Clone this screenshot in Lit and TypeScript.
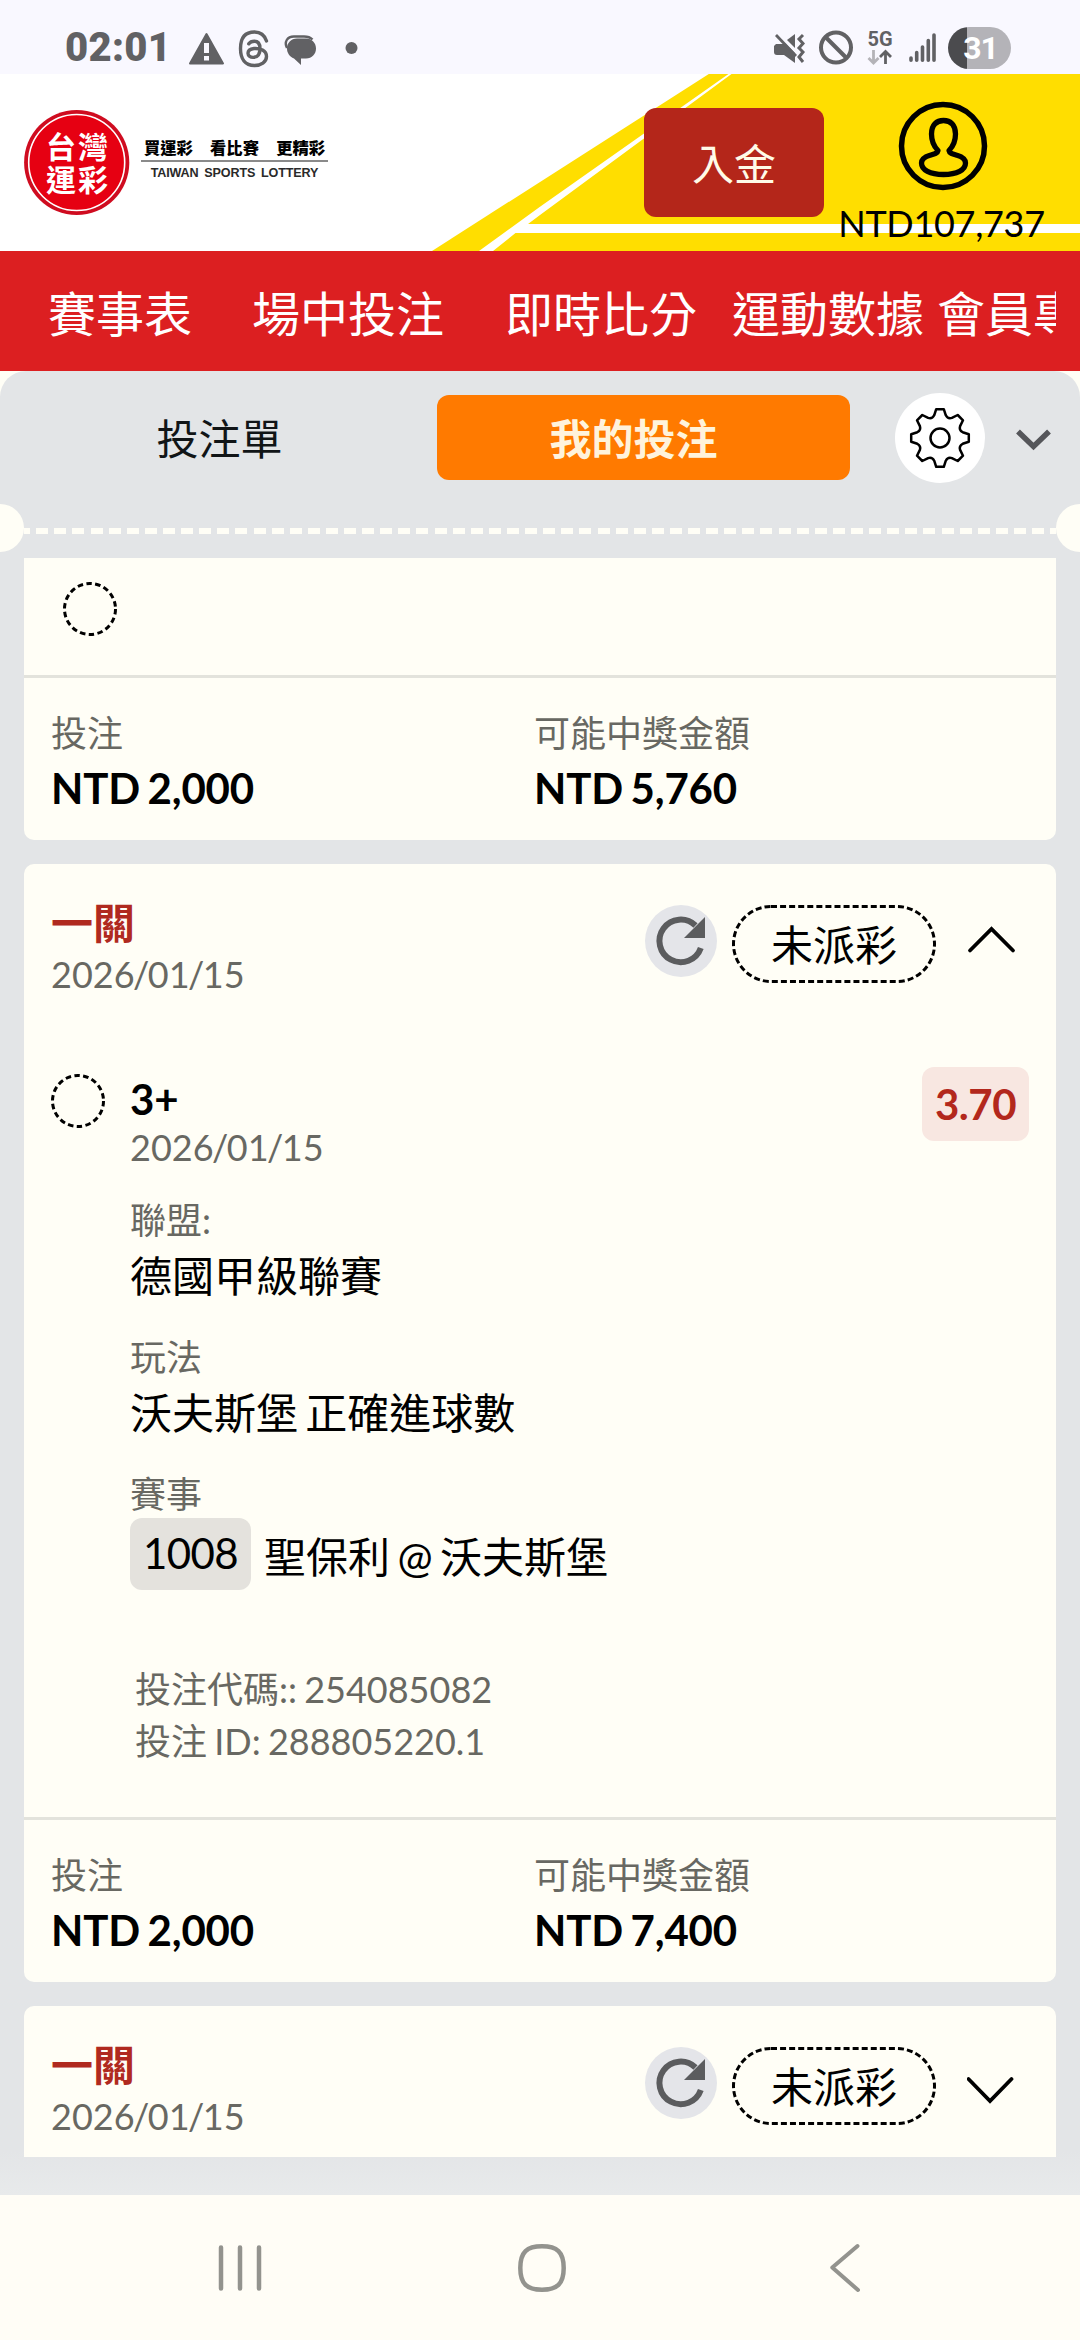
import { LitElement, html, css, svg, nothing } from "lit";
import { customElement, property } from "lit/decorators.js";

const FONT = css`Lato, "Noto Sans CJK TC", sans-serif`;

interface Leg {
  pick: string;
  date: string;
  odds: string;
  league: string;
  market: string;
  matchNo: string;
  match: string;
  code: string;
  id: string;
}

@customElement("status-bar")
class StatusBar extends LitElement {
  static styles = css`
    :host {
      display: block;
    }
    .bar {
      height: 74px;
      box-sizing: border-box;
      padding: 0 69px 0 65px;
      display: flex;
      justify-content: space-between;
      background: #f9f8ff;
      color: #616164;
      font-family: Roboto, sans-serif;
    }
    .left,
    .right {
      display: flex;
      align-items: flex-start;
    }
    .time {
      width: 120px;
      font-size: 40px;
      font-weight: 900;
      line-height: 96px;
      letter-spacing: 0.3px;
    }
    svg {
      display: block;
    }
    .battery {
      width: 63px;
      height: 42px;
      margin-top: 27px;
      border-radius: 21px;
      background: linear-gradient(90deg, #4b4b4e 19px, #b4b3b8 19px);
      color: #fff;
      font-size: 32px;
      font-weight: 700;
      line-height: 43px;
      text-align: center;
      box-sizing: border-box;
      padding-left: 2px;
      letter-spacing: -1px;
    }
  `;
  render() {
    return html`<div class="bar">
      <div class="left">
        <div class="time">02:01</div>
        <svg width="180" height="74" viewBox="185 0 180 74">
          <path fill="#616164" fill-rule="evenodd" stroke="#616164" stroke-width="2" stroke-linejoin="round"
            d="M206.5 34 L223 63.500 H190 Z" />
          <path fill="#f9f8ff" d="M204 43h5v10h-5z M204 56h5v4.500h-5z" />
          <path fill="none" stroke="#616164" stroke-width="3.400" stroke-linecap="round" stroke-linejoin="round"
            d="M266.500 41 C264.500 35 260.500 32 254.500 32 C245 32 240.500 38 240.500 48.500 C240.500 59 245 65.500 254.500 65.500 C261 65.500 266.500 62 266.500 56.500 C266.500 50.500 260 48 254 48.500 C250 49 248 50.800 248 53.300 C248 56 250.500 57.600 253.500 57.400 C258.500 57.100 260 53.500 260 48.500 C260 43.500 258 41.200 254.300 41.200 C251.800 41.200 250 42 248.800 43.800" />
          <path fill="none" stroke="#616164" stroke-width="2.400" d="M287 48 C284 42 287 36.500 294 36.500 H304 C308 36.500 311 38 312.500 39.500" />
          <path fill="#616164" d="M297 38.500 H306 C312 38.500 316 43 316 48.500 C316 54 312 58.500 306 58.500 H301 V65 L294 58.500 C289.500 56.500 287 53 287 48.500 C287 43 291 38.500 297 38.500 Z" />
          <circle cx="351.500" cy="48" r="6" fill="#616164" />
        </svg>
      </div>
      <div class="right">
        <svg width="178" height="74" viewBox="770 0 178 74">
          <g fill="#616164">
            <path d="M776 44 H783 L785 43 L795 53 V63 L784 55 H777 Q774 55 774 52 V46 Z" />
            <path d="M787 40 L795 34 V48 Z" />
          </g>
          <g fill="none" stroke="#616164">
            <path stroke-width="2.800" d="M776 35 L796 56" />
            <path stroke-width="3" d="M803 35 L799 39 L803 43.500 L799 48 L803 52 L799 57 L803 62" />
            <circle cx="836" cy="47.500" r="15" stroke-width="4" />
            <path stroke-width="4" d="M825.500 37 L846.500 58" />
            <path stroke="#b4b3b8" stroke-width="2.800" d="M873.500 50 V63 M868.500 58 L873.500 63 L878.500 58" />
            <path stroke-width="2.800" d="M885.500 64 V51.500 M880 57 L885.500 51.500 L891 57" />
            <path stroke-width="3.600" stroke-linecap="round" d="M911 58 V60.200 M916.700 52.500 V60.200 M922.500 47 V60.200 M928.300 40.500 V60.200 M934 35 V60.200" />
          </g>
          <text x="867.500" y="46" font-size="20" font-weight="700" fill="#616164">5G</text>
        </svg>
        <div class="battery">31</div>
      </div>
    </div>`;
  }
}

@customElement("site-header")
class SiteHeader extends LitElement {
  static styles = css`
    :host {
      display: block;
      font-family: ${FONT};
    }
    .header {
      position: relative;
      height: 177px;
      background: #fff;
    }
    .bg {
      position: absolute;
      inset: 0;
      display: block;
    }
    .content {
      position: relative;
      display: flex;
      height: 177px;
    }
    .seal {
      display: block;
      margin: 35px 0 0 23px;
    }
    .brand {
      margin: 64px 0 0 10px;
      width: 187px;
      height: 50px;
    }
    .slogan {
      display: flex;
      justify-content: space-between;
      height: 24px;
      padding: 0 3px 0 3px;
      font-size: 16.3px;
      font-weight: 900;
      line-height: 20px;
      color: #000;
      border-bottom: 2px solid #8a8a8a;
      box-sizing: border-box;
    }
    .english {
      font: 700 12.6px / 23px "Liberation Sans", sans-serif;
      color: #2a2a2a;
      text-align: center;
      word-spacing: 2.500px;
      letter-spacing: -0.15px;
      white-space: nowrap;
    }
    .deposit {
      margin: 34px 0 0 316px;
      width: 180px;
      height: 109px;
      border-radius: 12px;
      background: #b4261a;
      color: #fffbe8;
      font-size: 42px;
      line-height: 112px;
      text-align: center;
    }
    .account {
      width: 237px;
      display: flex;
      flex-direction: column;
      align-items: center;
      padding-top: 26px;
    }
    .account svg {
      display: block;
    }
    .balance {
      font-size: 36px;
      line-height: 44px;
      margin-top: 9px;
      padding-right: 2px;
      letter-spacing: -0.3px;
      color: #000;
    }
    .nav {
      height: 120px;
      background: #dc1f21;
      padding: 0 24px;
    }
    .items {
      display: flex;
      overflow: hidden;
      color: #fff;
      font-size: 48px;
      line-height: 126px;
      white-space: nowrap;
      height: 120px;
    }
    .items span {
      flex: none;
    }
    .w1 {
      width: 204px;
      margin-left: 24px;
    }
    .w2 {
      width: 253px;
    }
    .w3 {
      width: 227px;
    }
    .w4 {
      width: 205px;
    }
  `;
  render() {
    return html`<div class="header">
        <svg class="bg" width="1080" height="177" viewBox="0 74 1080 177">
          <path fill="#ffde00" d="M432 251 L708.800 74 H1080 V251 Z" />
          <path fill="#fff" d="M479 251 L540 206.700 L728.500 74 H731.500 L540 215 L528 224 H1080 V233 H515.500 L493 251 Z" />
        </svg>
        <div class="content">
          <svg class="seal" width="108" height="107" viewBox="23 109 108 107">
            <circle cx="76.700" cy="162.500" r="52.600" fill="#cf0c20" />
            <circle cx="76.700" cy="162.500" r="48" fill="#e60012" stroke="#fff" stroke-width="1.600" />
            <g fill="#fff" font-size="30" font-weight="700" letter-spacing="2">
              <text x="46" y="158">台灣</text>
              <text x="46" y="190.500">運彩</text>
            </g>
          </svg>
          <div class="brand">
            <div class="slogan"><span>買運彩</span><span>看比賽</span><span>更精彩</span></div>
            <div class="english">TAIWAN SPORTS LOTTERY</div>
          </div>
          <div class="deposit">入金</div>
          <div class="account">
            <svg width="92" height="92" viewBox="0 0 92 92" fill="none" stroke="#000">
              <circle cx="46" cy="46" r="41.500" stroke-width="5.500" />
              <path stroke-width="5.300" stroke-linejoin="round"
                d="M41 50.500 C36 45.500 34.500 41 34.500 34 C34.500 25 39.500 20.500 46.500 20.500 C53.500 20.500 58.500 25 58.500 34 C58.500 41 57 45.500 52 50.500 C52.500 53.500 56 54.200 60 55.300 C65.500 57 68.500 59.500 68.500 63 C68.500 70 60 74.500 46.500 74.500 C33 74.500 24.500 70 24.500 63 C24.500 59.500 27.500 57 33 55.300 C37 54.200 40.500 53.500 41 50.500 Z" />
            </svg>
            <div class="balance">NTD107,737</div>
          </div>
        </div>
      </div>
      <div class="nav">
        <div class="items">
          <span class="w1">賽事表</span><span class="w2">場中投注</span><span class="w3">即時比分</span
          ><span class="w4">運動數據</span><span>會員專區</span>
        </div>
      </div>`;
  }
}

@customElement("slip-tabs")
class SlipTabs extends LitElement {
  static styles = css`
    :host {
      display: block;
      font-family: ${FONT};
    }
    .tabs {
      display: flex;
      height: 133px;
      padding-left: 24px;
    }
    .tab {
      width: 413px;
      box-sizing: border-box;
      padding-right: 22px;
      margin-top: 24px;
      height: 85px;
      text-align: center;
      font-size: 42px;
      line-height: 88px;
      color: #111517;
    }
    .active {
      border-radius: 12px;
      background: #ff7a00;
      color: #fff3dc;
      font-weight: 700;
      padding-right: 20px;
    }
    .gear {
      width: 90px;
      height: 90px;
      margin: 22px 0 0 45px;
      border-radius: 50%;
      background: #fff;
    }
    .chev {
      margin: 51px 0 0 27px;
    }
    .perf {
      display: flex;
      height: 48px;
      align-items: center;
      justify-content: space-between;
    }
    .notch {
      width: 24px;
      height: 48px;
      background: #fffef6;
      border-radius: 0 24px 24px 0;
    }
    .notch.end {
      border-radius: 24px 0 0 24px;
    }
    .dash {
      flex: 1;
      height: 6px;
      margin-top: 6px;
      background: repeating-linear-gradient(90deg, #fffef6 0 12px, transparent 12px 18.107px) -5.900px 0 / 1050px 6px;
    }
  `;
  render() {
    const pts: string[] = [];
    for (let i = 0; i < 8; i++) {
      const a = (i * Math.PI) / 4;
      const p = (r: number, d: number) =>
        `${(45 + r * Math.sin(a + d)).toFixed(1)} ${(45 + r * Math.cos(a + d)).toFixed(1)}`;
      pts.push(
        `${i ? "L" : "M"}${p(29, -0.13)} L${p(29, 0.13)} L${p(23.4, 0.25)} Q${p(20.3, 0.3927)} ${p(23.4, 0.535)}`
      );
    }
    return html`<div class="tabs">
        <div class="tab">投注單</div>
        <div class="tab active">我的投注</div>
        <svg class="gear" viewBox="0 0 90 90" fill="none" stroke="#000" stroke-width="2.500" stroke-linejoin="round">
          <path d="${pts.join(" ")}Z" />
          <circle cx="45" cy="45" r="9.500" />
        </svg>
        <svg class="chev" width="44" height="36" viewBox="0 0 44 36" fill="none" stroke="#55565a" stroke-width="5.500">
          <path d="M6 9.500 L21.500 24.500 L37 9.500" />
        </svg>
      </div>
      <div class="perf">
        <div class="notch"></div>
        <div class="dash"></div>
        <div class="notch end"></div>
      </div>`;
  }
}

@customElement("bet-card")
class BetCard extends LitElement {
  @property() kind = "";
  @property() date = "";
  @property({ type: Boolean }) open = false;
  @property({ attribute: false }) leg?: Leg;
  @property() stake = "";
  @property() payout = "";

  static styles = css`
    :host {
      display: block;
      flex: none;
      font-family: ${FONT};
      color: #000;
    }
    .card {
      background: #fffef6;
      border-radius: 10px;
      overflow: hidden;
    }
    .card.cut {
      border-radius: 0 0 10px 10px;
    }
    .stub {
      height: 93px;
      padding: 24px 0 0 39px;
    }
    .head {
      display: flex;
      height: 176px;
      padding: 34px 27px 0;
    }
    .title {
      flex: 1;
    }
    .kind {
      font-size: 42px;
      font-weight: 700;
      line-height: 51px;
      color: #b02a1f;
    }
    .date {
      font-size: 36px;
      line-height: 51px;
      color: #686862;
    }
    .slash {
      margin: 0 -1.500px;
    }
    .refresh {
      width: 72px;
      height: 72px;
      margin-top: 7px;
      border-radius: 50%;
      background: #e4e5e9;
    }
    .pill {
      margin: 7px 0 0 15px;
      width: 204px;
      height: 78px;
      font-size: 42px;
      line-height: 80px;
      text-align: center;
    }
    .pill,
    .ring {
      box-sizing: border-box;
      position: relative;
    }
    .pill svg {
      position: absolute;
      inset: 0;
    }
    .ring {
      display: block;
      flex: none;
      width: 54px;
      height: 54px;
    }
    .toggle {
      margin: 7px 0 0 31px;
      width: 62px;
      height: 72px;
    }
    .leg {
      display: flex;
      height: 743px;
      padding: 0 27px;
    }
    .info {
      flex: 1;
      padding-left: 25px;
    }
    .pick {
      font-size: 42px;
      font-weight: 700;
      line-height: 50px;
    }
    .info .date {
      line-height: 46px;
    }
    .field {
      padding-top: 25px;
    }
    .label {
      font-size: 36px;
      line-height: 50px;
      color: #686862;
    }
    .value {
      font-size: 42px;
      line-height: 62px;
      white-space: nowrap;
      word-spacing: -3.500px;
    }
    .match {
      display: flex;
      font-size: 42px;
      line-height: 78px;
      margin-top: -1px;
      word-spacing: -3.300px;
    }
    .no {
      width: 121px;
      height: 72px;
      line-height: 71px;
      border-radius: 12px;
      background: #e4e2dd;
      text-align: center;
      margin-right: 13px;
      letter-spacing: -0.6px;
    }
    .meta {
      margin: 67px 0 0 5px;
      font-size: 36px;
      line-height: 52px;
      color: #686862;
      word-spacing: -2px;
    }
    .odds {
      width: 107px;
      height: 74px;
      margin-top: -7px;
      border-radius: 12px;
      background: #f8e7e1;
      color: #b3281c;
      font-size: 42px;
      font-weight: 700;
      line-height: 74px;
      text-align: center;
      letter-spacing: -0.5px;
    }
    .totals {
      display: flex;
      border-top: 3px solid #e3e3dc;
      padding: 30px 27px 22px;
      height: 110px;
    }
    .col {
      flex: 0 0 483px;
    }
    .amount {
      font-size: 42px;
      font-weight: 700;
      line-height: 61px;
      letter-spacing: -0.2px;
      word-spacing: -2.300px;
      white-space: nowrap;
    }
  `;

  ring() {
    return html`<svg class="ring" viewBox="0 0 54 54">
      <circle cx="27" cy="27" r="25.500" fill="none" stroke="#000" stroke-width="3" stroke-dasharray="5.500 3.401" />
    </svg>`;
  }

  day(date: string) {
    return html`<div class="date">${date
      .split("/")
      .map((part, i) => (i ? html`<span class="slash">/</span>${part}` : part))}</div>`;
  }

  render() {
    const { leg } = this;
    return html`<div class="card ${this.kind ? "" : "cut"}">
      ${this.kind
        ? html`<div class="head">
            <div class="title">
              <div class="kind">${this.kind}</div>
              ${this.day(this.date)}
            </div>
            <svg class="refresh" viewBox="0 0 72 72">
              <path fill="none" stroke="#5b5c5e" stroke-width="6" d="M55.800 43 A21.300 21.300 0 1 1 50.500 20.500" />
              <path fill="#5b5c5e" d="M60 12 V33 H39 Z" />
            </svg>
            <div class="pill">
              <svg width="204" height="78" viewBox="0 0 204 78">
                <rect x="1.500" y="1.500" width="201" height="75" rx="37.500" fill="none" stroke="#000" stroke-width="3" stroke-dasharray="6 3.070" />
              </svg>
              未派彩
            </div>
            <svg class="toggle" viewBox="0 0 62 72" fill="none" stroke="#000" stroke-width="3.800" stroke-linecap="round">
              ${this.open ? svg`<path d="M3 45.500 L24.500 24 L46 45.500" />` : svg`<path d="M1.500 32 L23 54 L44.500 32" />`}
            </svg>
          </div>`
        : html`<div class="stub">${this.ring()}</div>`}
      ${leg
        ? html`<div class="leg">
            ${this.ring()}
            <div class="info">
              <div class="pick">${leg.pick}</div>
              ${this.day(leg.date)}
              <div class="field">
                <div class="label">聯盟:</div>
                <div class="value">${leg.league}</div>
              </div>
              <div class="field">
                <div class="label">玩法</div>
                <div class="value">${leg.market}</div>
              </div>
              <div class="field">
                <div class="label">賽事</div>
                <div class="match"><span class="no">${leg.matchNo}</span><span>${leg.match}</span></div>
              </div>
              <div class="meta">
                <div>投注代碼:: ${leg.code}</div>
                <div>投注 ID: ${leg.id}</div>
              </div>
            </div>
            <div class="odds">${leg.odds}</div>
          </div>`
        : nothing}
      ${this.stake
        ? html`<div class="totals">
            <div class="col">
              <div class="label">投注</div>
              <div class="amount">${this.stake}</div>
            </div>
            <div>
              <div class="label">可能中獎金額</div>
              <div class="amount">${this.payout}</div>
            </div>
          </div>`
        : nothing}
    </div>`;
  }
}

@customElement("system-nav")
class SystemNav extends LitElement {
  static styles = css`
    :host {
      display: block;
    }
    .nav {
      display: flex;
      height: 145px;
      box-sizing: border-box;
      padding: 45px 0 0 214px;
      background: #fffdf6;
    }
    .recent {
      margin-right: 249px;
    }
    .home {
      margin-right: 257px;
    }
  `;
  render() {
    return html`<div class="nav">
      <svg class="recent" width="52" height="56" viewBox="0 0 52 56" stroke="#93938e" stroke-width="4.500" stroke-linecap="round">
        <path d="M7 7.500 V48.500 M26 7.500 V48.500 M45 7.500 V48.500" />
      </svg>
      <svg class="home" width="54" height="56" viewBox="0 0 54 56" fill="none" stroke="#93938e" stroke-width="4.500">
        <path d="M27 6.300 C42 6.300 48.700 12 48.700 28 C48.700 44 42 49.700 27 49.700 C12 49.700 5.300 44 5.300 28 C5.300 12 12 6.300 27 6.300 Z" />
      </svg>
      <svg width="40" height="56" viewBox="0 0 40 56" fill="none" stroke="#93938e" stroke-width="4" stroke-linecap="round" stroke-linejoin="round">
        <path d="M31.500 6 L6.300 27.500 L32 50" />
      </svg>
    </div>`;
  }
}

@customElement("app-root")
class AppRoot extends LitElement {
  static styles = css`
    :host {
      display: block;
      width: 1080px;
      height: 2340px;
      overflow: hidden;
      background: #fffef6;
    }
    .panel {
      height: 1824px;
      background: linear-gradient(#e3e5e7 0 1780px, #e8eaeb);
      border-radius: 26px 26px 0 0;
    }
    .list {
      display: flex;
      flex-direction: column;
      gap: 24px;
      height: 1599px;
      margin: 6px 24px 0;
      overflow: hidden;
    }
  `;

  private leg: Leg = {
    pick: "3+",
    date: "2026/01/15",
    odds: "3.70",
    league: "德國甲級聯賽",
    market: "沃夫斯堡 正確進球數",
    matchNo: "1008",
    match: "聖保利 @ 沃夫斯堡",
    code: "254085082",
    id: "288805220.1",
  };

  render() {
    return html`
      <status-bar></status-bar>
      <site-header></site-header>
      <div class="panel">
        <slip-tabs></slip-tabs>
        <div class="list">
          <bet-card stake="NTD 2,000" payout="NTD 5,760"></bet-card>
          <bet-card kind="一關" date="2026/01/15" open .leg=${this.leg} stake="NTD 2,000" payout="NTD 7,400"></bet-card>
          <bet-card kind="一關" date="2026/01/15"></bet-card>
        </div>
      </div>
      <system-nav></system-nav>
    `;
  }
}
